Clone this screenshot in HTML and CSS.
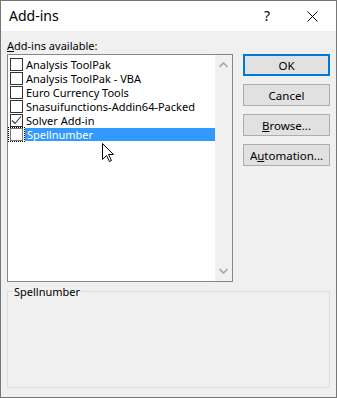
FILE: index.html
```html
<!DOCTYPE html>
<html lang="en">
<head>
    <meta charset="UTF-8">
    <title>Add-ins</title>
    <link rel="stylesheet" href="styles.css">
</head>
<body>
    <div class="window">
        <div class="titlebar">
            <span class="title">Add-ins</span>
            <span class="help">?</span>
            <svg class="close" width="11" height="11" viewBox="0 0 11 11">
                <path d="M0.5 0.5 L10.5 10.5 M10.5 0.5 L0.5 10.5" stroke="#000" stroke-width="1" fill="none"/>
            </svg>
        </div>

        <div class="content">
            <div class="top-row">
                <div class="list-column">
                    <div class="label"><u>A</u>dd-ins available:</div>
                    <div class="listbox">
                        <ul class="items">
                            <li class="item"><span class="check"></span><span class="name">Analysis ToolPak</span></li>
                            <li class="item"><span class="check"></span><span class="name">Analysis ToolPak - VBA</span></li>
                            <li class="item"><span class="check"></span><span class="name">Euro Currency Tools</span></li>
                            <li class="item"><span class="check"></span><span class="name">Snasuifunctions-Addin64-Packed</span></li>
                            <li class="item">
                                <span class="check">
                                    <svg width="11" height="11" viewBox="0 0 11 11">
                                        <path d="M1 5.5 L4 8.5 L10 1.5" stroke="#333" stroke-width="1.1" fill="none"/>
                                    </svg>
                                </span><span class="name">Solver Add-in</span>
                            </li>
                            <li class="item selected"><span class="focus"><span class="check"></span></span><span class="name">Spellnumber</span></li>
                        </ul>
                        <div class="scrollbar">
                            <svg width="9" height="6" viewBox="0 0 9 6"><path d="M0.5 5 L4.5 1 L8.5 5" stroke="#a6a6a6" stroke-width="1.6" fill="none"/></svg>
                            <svg width="9" height="6" viewBox="0 0 9 6"><path d="M0.5 1 L4.5 5 L8.5 1" stroke="#a6a6a6" stroke-width="1.6" fill="none"/></svg>
                        </div>
                        <!-- mouse pointer over the list -->
                        <svg class="cursor" width="13" height="20" viewBox="0 0 13 20">
                            <path d="M0.5 0.5 L0.5 16.5 L4.5 12.5 L7.5 18.5 L9.5 17.5 L6.5 11.5 L11.5 11.5 Z" fill="#fff" stroke="#000" stroke-width="1"/>
                        </svg>
                    </div>
                </div>

                <div class="buttons">
                    <button class="btn default">OK</button>
                    <button class="btn">Cancel</button>
                    <button class="btn"><u>B</u>rowse...</button>
                    <button class="btn">A<u>u</u>tomation...</button>
                </div>
            </div>

            <div class="groupbox">
                <span class="legend">Spellnumber</span>
            </div>
        </div>
    </div>
</body>
</html>
```

FILE: styles.css
```css
* {
    box-sizing: border-box;
}
body {
    margin: 0;
    font-family: "Noto Sans", "Open Sans", Arial, sans-serif;
    font-size: 11px;
    color: #000;
    background: #fff;
}
.window {
    width: 337px;
    height: 398px;
    border: 1px solid #777;
    display: flex;
    flex-direction: column;
    background: #f0f0f0;
}
.titlebar {
    height: 30px;
    background: #fff;
    display: flex;
    align-items: center;
    padding-left: 8px;
}
.title {
    font-size: 14px;
    flex: 1;
    padding-bottom: 1px;
}
.help {
    font-size: 14px;
    margin-right: 37px;
    padding-bottom: 1px;
}
.close {
    margin-right: 18px;
}
.content {
    flex: 1;
    padding: 8px 6px 9px 6px;
    display: flex;
    flex-direction: column;
}
.top-row {
    display: flex;
    gap: 10px;
}
.list-column {
    width: 226px;
}
.label {
    height: 15px;
    line-height: 14px;
}
.label u {
    text-underline-offset: 1px;
}
.listbox {
    position: relative;
    height: 228px;
    border: 1px solid #828790;
    background: #fff;
    display: flex;
}
.items {
    list-style: none;
    margin: 0;
    padding: 2px 0 0 2px;
    flex: 1;
}
.item {
    height: 14px;
    display: flex;
    align-items: center;
}
.check {
    width: 13px;
    height: 13px;
    border: 1px solid #333;
    background: #fff;
    display: flex;
    align-items: center;
    justify-content: center;
}
.name {
    margin-left: 3px;
    line-height: 13px;
    white-space: nowrap;
}
.selected .focus {
    border: 1px dotted #000;
    margin-left: -2px;
    padding: 0 1px;
    height: 15px;
    display: flex;
    align-items: center;
}
.selected .check {
    border-color: #777;
}
.selected .name {
    background: #3399ff;
    color: #fff;
    flex: 1;
    height: 13px;
    margin-left: 0;
    padding-left: 2px;
}
.scrollbar {
    width: 17px;
    background: #f0f0f0;
    display: flex;
    flex-direction: column;
    justify-content: space-between;
    align-items: center;
    padding: 7px 0 7px 0;
}
.cursor {
    position: absolute;
    left: 94px;
    top: 88px;
}
.buttons {
    display: flex;
    flex-direction: column;
    gap: 8px;
    padding-top: 15px;
}
.btn {
    width: 87px;
    height: 22px;
    background: #e1e1e1;
    border: 1px solid #adadad;
    font-family: inherit;
    font-size: 11.5px;
    color: #000;
    padding: 0;
}
.btn.default {
    border: 2px solid #0078d7;
}
.btn u {
    text-underline-offset: 1px;
}
.groupbox {
    position: relative;
    margin-top: 9px;
    height: 97px;
    border: 1px solid #dcdcdc;
}
.legend {
    position: absolute;
    left: 5px;
    top: -8px;
    padding: 0 1px;
    background: #f0f0f0;
    line-height: 15px;
}
```
